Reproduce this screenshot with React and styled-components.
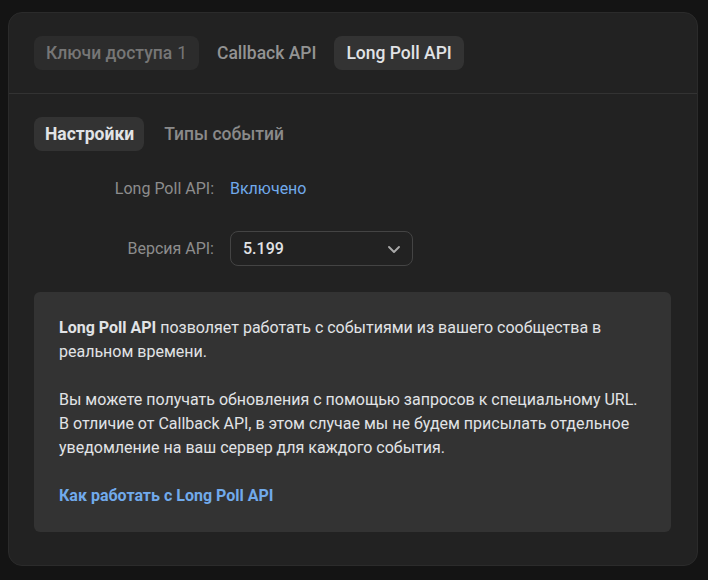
import * as React from 'react';
import styled, { createGlobalStyle } from 'styled-components';

const GlobalStyle = createGlobalStyle`
  html, body {
    margin: 0;
    background: #141414;
  }
  body {
    padding: 12px 10px 14px 8px;
    font-family: Roboto, 'Noto Sans', Arial, sans-serif;
    -webkit-font-smoothing: antialiased;
  }
`;

const topTabs = [
  { id: 'keys', label: 'Ключи доступа', count: 1 },
  { id: 'callback', label: 'Callback API' },
  { id: 'longpoll', label: 'Long Poll API' },
];

const subTabs = [
  { id: 'settings', label: 'Настройки' },
  { id: 'types', label: 'Типы событий' },
];

const Chevron = () => (
  <svg width="18" height="18" viewBox="0 0 18 18" fill="none">
    <path
      d="M4 7l5 5 5-5"
      stroke="#aaaaaa"
      strokeWidth="1.9"
      strokeLinecap="round"
      strokeLinejoin="round"
    />
  </svg>
);

export default function App() {
  return (
    <>
      <GlobalStyle />
      <Card>
        <TopBar>
          {topTabs.map((tab) => (
            <TopTab key={tab.id} $active={tab.id === 'longpoll'} $muted={tab.id === 'keys'}>
              {tab.label}
              {tab.count && <Count>{tab.count}</Count>}
            </TopTab>
          ))}
        </TopBar>
        <Body>
          <SubBar>
            {subTabs.map((tab) => (
              <SubTab key={tab.id} $active={tab.id === 'settings'}>
                {tab.label}
              </SubTab>
            ))}
          </SubBar>
          <Form>
            <Label>Long Poll API:</Label>
            <Value>Включено</Value>
            <Label>Версия API:</Label>
            <Select>
              <span>5.199</span>
              <Chevron />
            </Select>
          </Form>
          <Info>
            <Para>
              <b>Long Poll API</b> позволяет работать с событиями из вашего сообщества в
              <br />
              реальном времени.
            </Para>
            <Para>
              Вы можете получать обновления с помощью запросов к специальному URL.
              <br />
              В отличие от Callback API, в этом случае мы не будем присылать отдельное
              <br />
              уведомление на ваш сервер для каждого события.
            </Para>
            <Link>Как работать с Long Poll API</Link>
          </Info>
        </Body>
      </Card>
    </>
  );
}

const Card = styled.div`
  background: #222222;
  border: 1px solid #2b2b2b;
  border-radius: 14px;
  box-sizing: border-box;
  height: 554px;
`;

const TopBar = styled.div`
  display: flex;
  align-items: center;
  gap: 6px;
  padding: 23px 25px 23px;
  border-bottom: 1px solid #333333;
`;

const TopTab = styled.div`
  display: flex;
  align-items: center;
  height: 34px;
  padding: 0 12px;
  border-radius: 8px;
  font-size: 17.5px;
  font-weight: 500;
  color: ${(p) => (p.$active ? '#e1e3e6' : p.$muted ? '#767676' : '#939393')};
  background: ${(p) => (p.$active ? '#333333' : p.$muted ? '#2c2c2c' : 'transparent')};
  & + & {
    margin-left: ${(p) => (p.$active ? 0 : 1)}px;
  }
`;

const Count = styled.span`
  margin-left: 5px;
  font-weight: 400;
`;

const Body = styled.div`
  padding: 23px 26px 0 25px;
`;

const SubBar = styled.div`
  display: flex;
  gap: 9px;
`;

const SubTab = styled.div`
  display: flex;
  align-items: center;
  height: 34px;
  padding: 0 10px 0 11px;
  border-radius: 8px;
  font-size: 17.5px;
  font-weight: ${(p) => (p.$active ? 700 : 500)};
  color: ${(p) => (p.$active ? '#e1e3e6' : '#8a8a8a')};
  background: ${(p) => (p.$active ? '#333333' : 'transparent')};
`;

const Form = styled.div`
  display: grid;
  grid-template-columns: 180px 183px;
  column-gap: 16px;
  row-gap: 25px;
  align-items: center;
  margin-top: 20px;
  font-size: 16px;
`;

const Label = styled.div`
  text-align: right;
  color: #8d8d8d;
`;

const Value = styled.div`
  color: #71aaeb;
  line-height: 35px;
`;

const Select = styled.div`
  display: flex;
  align-items: center;
  justify-content: space-between;
  height: 35px;
  box-sizing: border-box;
  padding: 0 9px 0 12px;
  border: 1px solid #444444;
  border-radius: 8px;
  color: #e1e3e6;
  font-weight: 500;
`;

const Info = styled.div`
  margin-top: 26px;
  padding: 24px 25px 24px;
  background: #333333;
  border-radius: 6px;
  font-size: 16px;
  line-height: 24px;
  color: #e1e3e6;
  b {
    font-weight: 700;
  }
`;

const Para = styled.p`
  margin: 0 0 24px;
`;

const Link = styled.div`
  color: #71aaeb;
  font-weight: 700;
`;
